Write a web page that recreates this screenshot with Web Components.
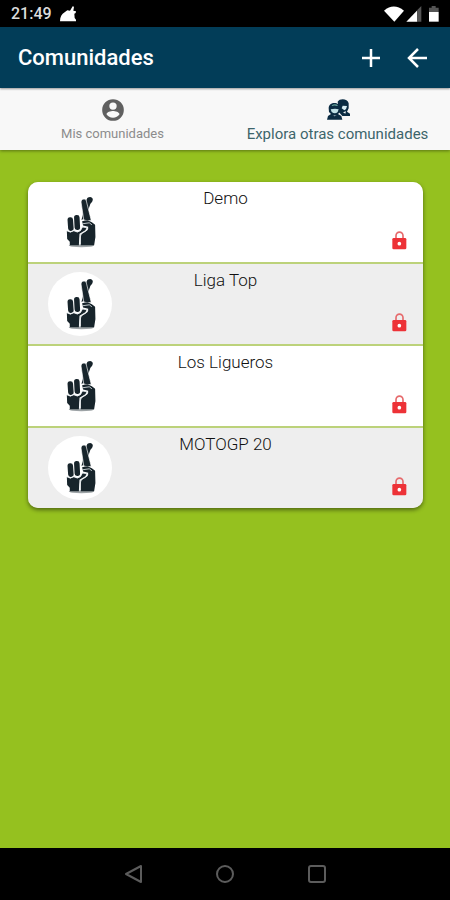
<!DOCTYPE html>
<html lang="es">
<head>
<meta charset="utf-8">
<meta name="viewport" content="width=device-width, initial-scale=1">
<title>Comunidades</title>
<style>
body { margin: 0; background: #95c11f; font-family: Roboto, "Noto Sans", sans-serif; }
</style>
</head>
<body>
<community-app></community-app>

<template id="t-app">
<style>
:host { display: flex; flex-direction: column; min-height: 100vh; background: #95c11f; }
main { flex: 1; padding: 32px 27px 32px 28px; }
</style>
<status-bar></status-bar>
<app-bar>Comunidades</app-bar>
<tab-bar></tab-bar>
<main>
<community-list>
<community-row>Demo</community-row>
<community-row shaded>Liga Top</community-row>
<community-row>Los Ligueros</community-row>
<community-row shaded>MOTOGP 20</community-row>
</community-list>
</main>
<nav-bar></nav-bar>
</template>

<template id="t-status">
<style>
:host { display: flex; align-items: center; height: 27px; padding: 0 10px 0 11px; background: #000; color: #dcdcdc; font-size: 16px; font-weight: 500; }
svg { display: block; fill: #fff; }
.note { margin-left: 8px; flex: none; }
.sys { margin-left: auto; }
</style>
<span>21:49</span>
<svg class="note" width="16" height="16" viewBox="0 0 48 48"><path d="M0 46C0 33 5 24 14 19L22 13L30 14L38 1L42 2L40 14L48 16L47 21L43 23L44 36L48 41V46Z"/></svg>
<svg class="sys" width="56" height="17" viewBox="0 0 168 51">
<path d="M0 17Q29-8 60 17L31 50Z"/><path d="M67 50L100 16V50Z"/><path fill="#555" d="M100 15L112 3V50H100Z"/>
<path fill="#555" d="M135 8H143V3H155V8H164V21H135Z"/><path d="M135 21H164V50H135Z"/>
</svg>
</template>

<template id="t-appbar">
<style>
:host { display: flex; align-items: center; height: 61px; padding: 0 18px; background: #023d58; color: #fff; box-shadow: 0 1px 2px #0006; position: relative; }
h1 { margin: 0 auto 0 0; font-size: 22px; line-height: 28px; font-weight: 500; }
.actions { display: flex; gap: 19px; }
button { display: block; border: 0; padding: 0; background: none; color: inherit; width: 28px; height: 28px; }
svg { display: block; margin: auto; fill: none; stroke: currentColor; stroke-width: 2.500; }
</style>
<style>:host { padding-right: 18px; }</style>
<h1><slot></slot></h1>
<div class="actions">
<button aria-label="Crear comunidad"><svg width="28" height="28" viewBox="0 0 28 28"><path d="M14 5V23M5 14H23"/></svg></button>
<button aria-label="Volver"><svg width="28" height="28" viewBox="0 0 28 28"><path d="M23 14H6M14 5L5 14L14 23"/></svg></button>
</div>
</template>

<template id="t-tabs">
<style>
:host { display: grid; grid-template-columns: 1fr 1fr; height: 62px; background: #f8f8f8; box-shadow: 0 1px 3px #0006; }
button { display: flex; flex-direction: column; align-items: center; gap: 1px; border: 0; padding: 9px 0 0; background: none; font: 13px/20px Roboto, "Noto Sans", sans-serif; color: #8c8c8c; white-space: nowrap; }
button[aria-selected=true] { color: #3d656b; font-size: 15px; }
svg { display: block; flex: none; }
</style>
<button role="tab" aria-selected="false">
<svg width="26" height="26" viewBox="0 0 24 24" fill="#606060"><path d="M12 2a10 10 0 1 0 0 20 10 10 0 0 0 0-20zm0 3a3.400 3.400 0 1 1 0 6.800 3.400 3.400 0 0 1 0-6.800zm0 14.200a7.200 7.200 0 0 1-6-3.200c0-2 4-3.100 6-3.100s6 1.100 6 3.100a7.200 7.200 0 0 1-6 3.200z"/></svg>
Mis comunidades</button>
<button role="tab" aria-selected="true">
<svg width="26" height="26" viewBox="0 0 78 78">
<path fill="#0b2c43" d="M38 14C44 3 68 4 71 19V34L66 44L75 50V57H52L42 46Z"/><path fill="#d9eef4" d="M53 26L66 27Q65 37 58 40L50 34Z"/><path fill="#edf6f8" d="M54 46L63 43L61 50Z"/>
<path fill="#0b2c43" d="M11 34C11 13 45 13 46 34L45 45L39 51L49 57L52 68H6L9 57L18 51L12 45Z"/><path fill="#bfe0e5" d="M17 37Q31 33 41 37L38 45Q30 53 20 45Z"/><path fill="#edf6f8" d="M22 54Q29 57 36 54L29 58Z"/><path fill="#66a39b" d="M20 25Q30 18 39 25L36 27Q28 24 22 27Z"/></svg>
Explora otras comunidades</button>
</template>

<template id="t-list">
<style>
:host { display: flex; flex-direction: column; gap: 2px; overflow: hidden; border-radius: 10px; background: #bcd27a; box-shadow: 0 2px 4px #0007; }
</style>
<slot></slot>
</template>

<template id="t-row">
<style>
:host { display: grid; grid-template-columns: 64px 1fr 64px; height: 80px; box-sizing: border-box; padding: 0 20px; background: #fff; color: #111; }
:host([shaded]) { background: #eee; }
.avatar { display: block; align-self: center; width: 64px; height: 64px; border-radius: 50%; background: #fff; }
h2 { margin: 5px 0 0; font-size: 17px; line-height: 22px; font-weight: 300; text-align: center; }
.lock { display: block; align-self: end; justify-self: end; margin: 0 -4px 12px 0; }
</style>
<svg class="avatar" viewBox="84 44 197 197">
<ellipse cx="187" cy="215" rx="39" ry="5" fill="#9da3a6"/>
<g fill="#17242b"><path d="M203 73C206 63 222 63 222 74C221 82 214 84 213 91L199 130L187 136Z"/>
<path stroke="#fff" stroke-width="2" d="M186 83C184 71 199 68 202 78L217 137Q205 142 194 136Z"/>
<path d="M189 140Q207 135 219 143L229 151L230 189L226 214H185V181L206 167L208 157L192 153Z"/>
<rect x="145" y="128" width="17" height="42" rx="8" transform="rotate(-4 153 149)"/>
<rect x="165" y="121" width="17" height="46" rx="8" transform="rotate(-3 173 144)"/>
<path d="M142 170L153 175L164 170L174 175L184 170L190 159L203 160L199 168L181 179L179 214H151V203L143 195Z"/></g>
<path d="M142 169Q152 177 163 169Q174 176 184 168L191 157L207 162Q205 171 188 177Q181 188 182 214M190 148L211 145L219 151" fill="none" stroke="#e6ecef" stroke-width="2.500"/>
</svg>
<h2><slot></slot></h2>
<svg class="lock" width="15" height="19" viewBox="0 0 45 57" role="img" aria-label="Privada"><path d="M12 24V14a10.500 10.500 0 0 1 21 0V24" fill="none" stroke="#e66b6d" stroke-width="5"/><rect x="1" y="21" width="42" height="34" rx="4" fill="#ed3237"/><circle cx="22" cy="38" r="5.500" fill="#fff"/></svg>
</template>

<template id="t-nav">
<style>
:host { display: flex; align-items: center; justify-content: center; gap: 68px; height: 52px; background: #000; }
button { border: 0; padding: 0; background: none; width: 24px; height: 24px; }
svg { display: block; fill: none; stroke: #5c5c5c; stroke-width: 2; stroke-linejoin: round; }
</style>
<button aria-label="Atrás"><svg width="24" height="24" viewBox="0 0 24 24"><path d="M5 12L20 4V20Z"/></svg></button>
<button aria-label="Inicio"><svg width="24" height="24" viewBox="0 0 24 24"><circle cx="12" cy="12" r="8"/></svg></button>
<button aria-label="Recientes"><svg width="24" height="24" viewBox="0 0 24 24"><rect x="4" y="4" width="16" height="16" rx="2"/></svg></button>
</template>

<script>
const define = (name, templateId) => customElements.define(name, class extends HTMLElement {
  constructor() {
    super();
    this.attachShadow({ mode: "open" }).append(document.getElementById(templateId).content.cloneNode(true));
  }
});
define("status-bar", "t-status");
define("app-bar", "t-appbar");
define("tab-bar", "t-tabs");
define("community-row", "t-row");
define("community-list", "t-list");
define("nav-bar", "t-nav");
define("community-app", "t-app");
</script>
</body>
</html>
